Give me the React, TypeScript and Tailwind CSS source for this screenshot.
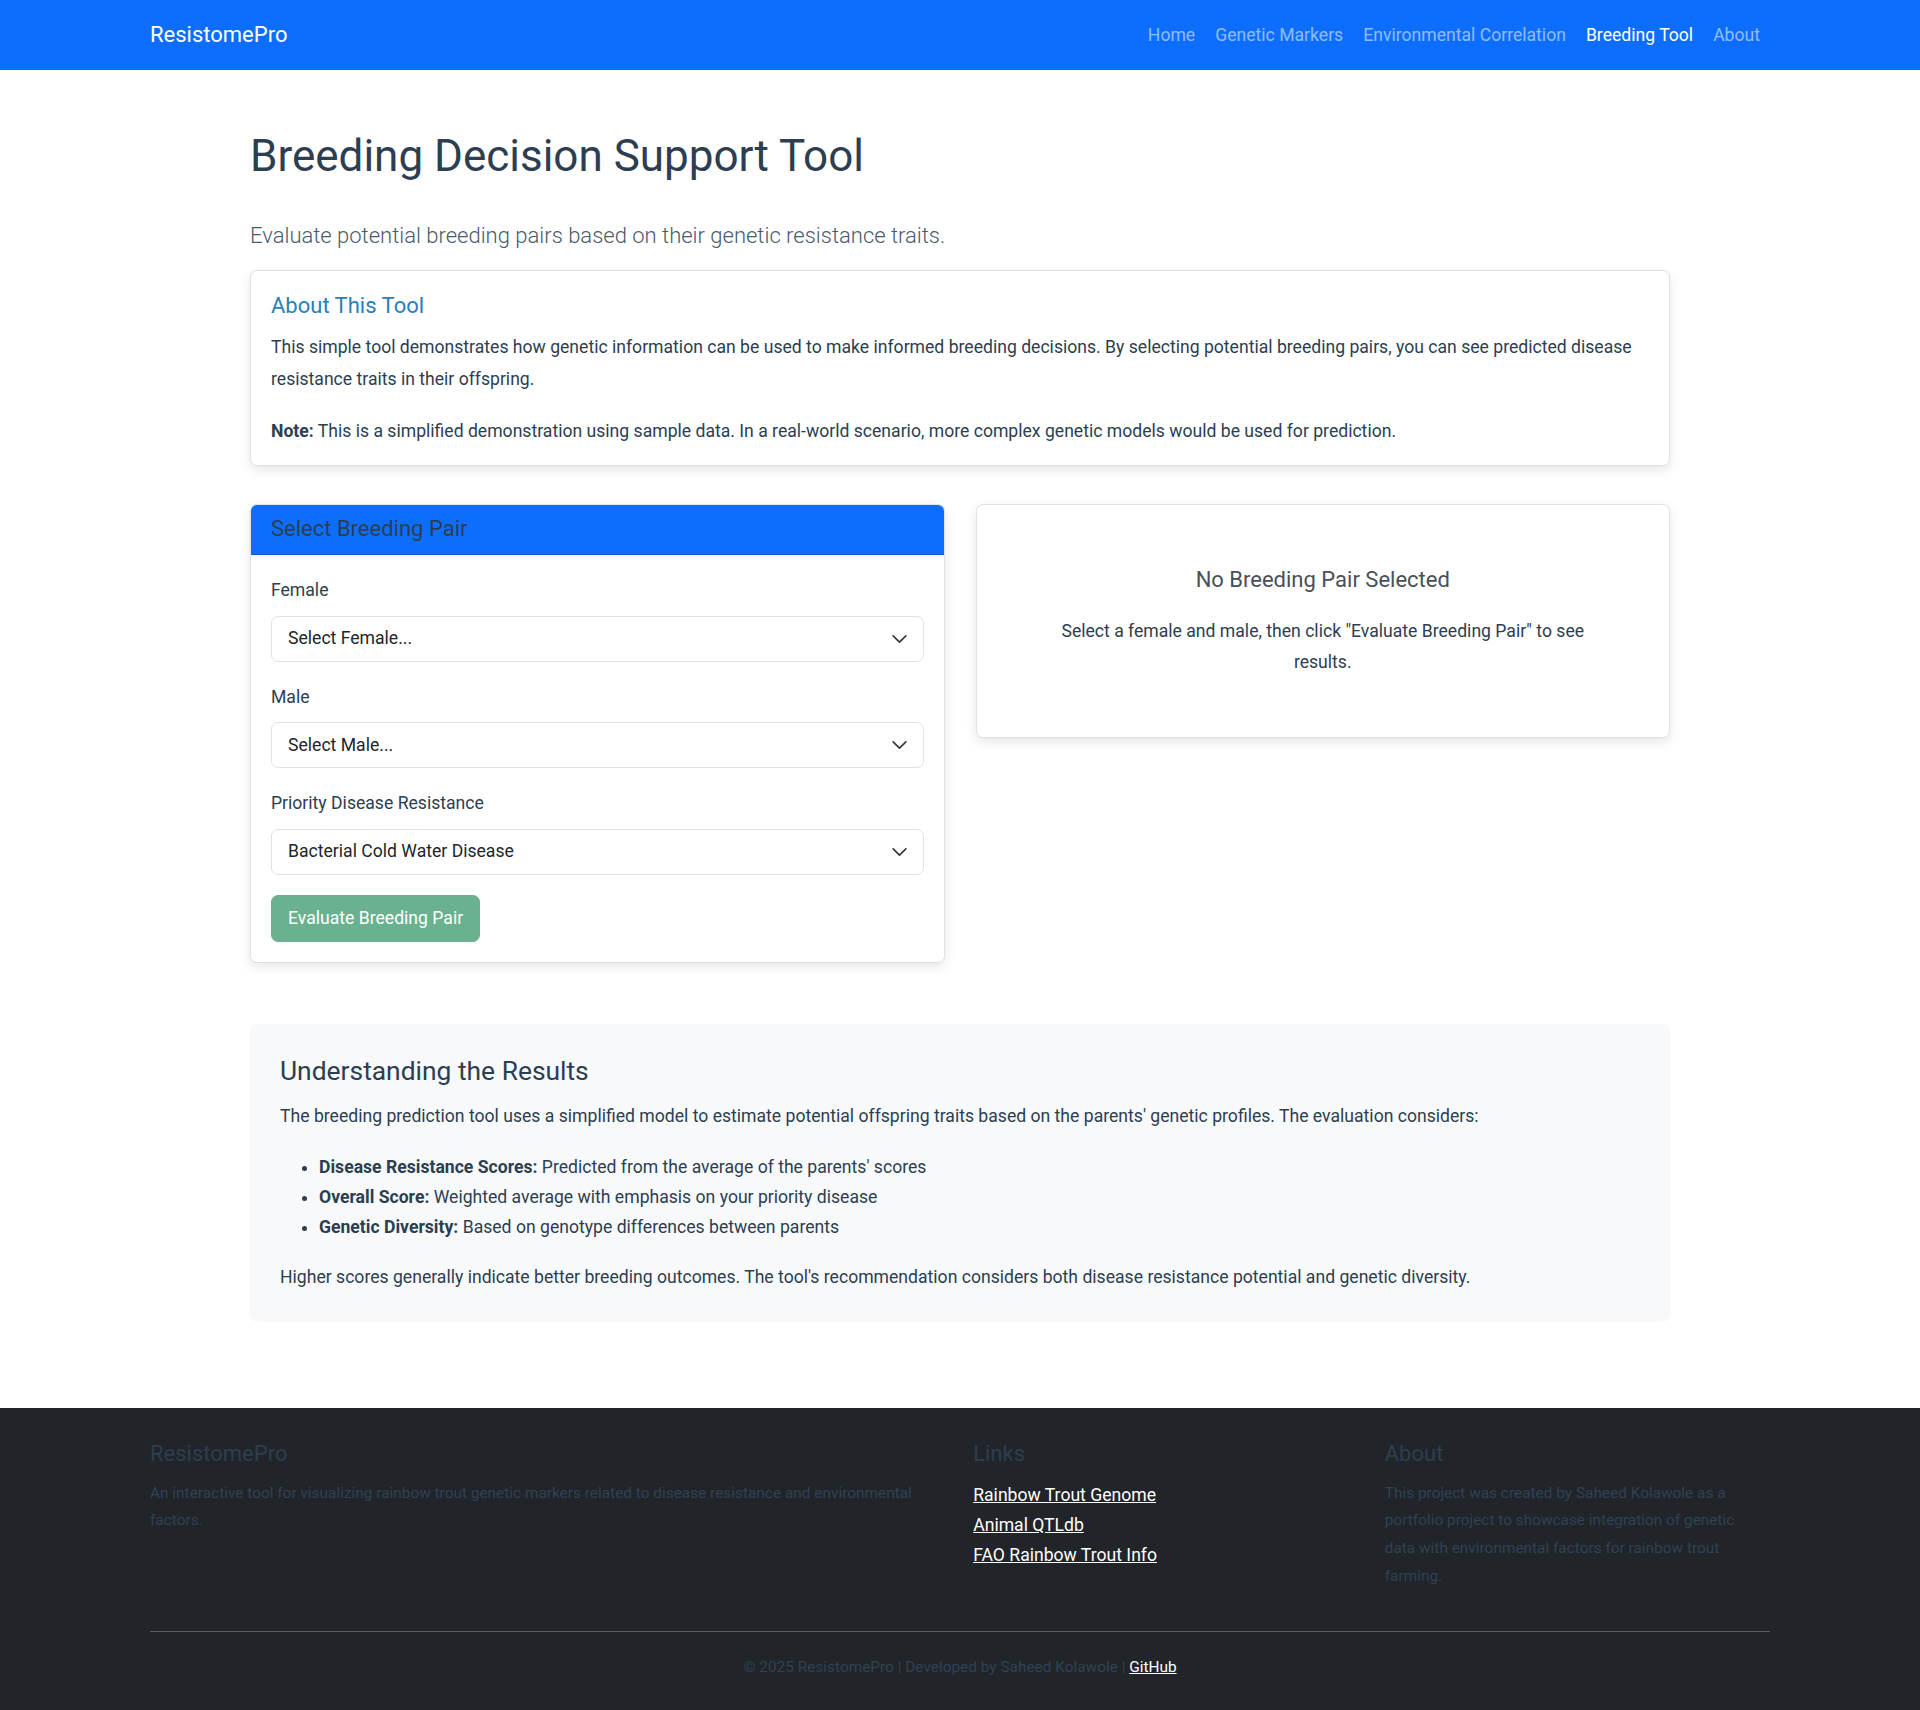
import React from "react";

const navLinks = [
  { label: "Home", active: false },
  { label: "Genetic Markers", active: false },
  { label: "Environmental Correlation", active: false },
  { label: "Breeding Tool", active: true },
  { label: "About", active: false },
];

const selects = [
  { id: "female", label: "Female", value: "Select Female..." },
  { id: "male", label: "Male", value: "Select Male..." },
  { id: "priority", label: "Priority Disease Resistance", value: "Bacterial Cold Water Disease" },
];

function Chevron() {
  return (
    <svg
      viewBox="0 0 16 16"
      className="pointer-events-none absolute right-[16px] top-1/2 h-[17px] w-[17px] -translate-y-1/2"
      fill="none"
      stroke="#343a40"
      strokeWidth="1.6"
      strokeLinecap="round"
      strokeLinejoin="round"
    >
      <path d="m2 5 6 6 6-6" />
    </svg>
  );
}

export default function App() {
  return (
    <div className="min-h-screen bg-white font-['Roboto','Liberation_Sans',sans-serif] text-[17.6px] leading-[1.8] text-[#2c3e50]">
      {/* Navbar */}
      <nav className="h-[70px] bg-[#0d6efd]">
        <div className="mx-auto flex h-full max-w-[1620px] items-center justify-between">
          <a href="#" className="text-[22px] leading-none text-white">
            ResistomePro
          </a>
          <ul className="flex">
            {navLinks.map((l) => (
              <li key={l.label}>
                <a
                  href="#"
                  className={
                    l.active
                      ? "block px-[10px] pt-[2px] text-[17.6px] leading-none text-white"
                      : "block px-[10px] pt-[2px] text-[17.6px] leading-none text-[rgba(255,255,255,0.55)]"
                  }
                >
                  {l.label}
                </a>
              </li>
            ))}
          </ul>
        </div>
      </nav>

      {/* Main */}
      <main className="mx-auto max-w-[1420px] pb-[86px] pt-[60px]">
        <h1 className="text-[44px] font-normal leading-[1.2]">Breeding Decision Support Tool</h1>
        <p className="mt-[36px] text-[22px] font-light leading-[1.5] text-[#4a5a6b]">
          Evaluate potential breeding pairs based on their genetic resistance traits.
        </p>

        {/* About card */}
        <div className="mt-[18px] rounded-[7px] border border-[#dee2e6] bg-white px-[20px] pb-[18px] pt-[22px] shadow-[0_4px_12px_rgba(0,0,0,0.1)]">
          <h5 className="mb-[13px] text-[22px] leading-[1.2] text-[#2980b9]">About This Tool</h5>
          <p className="mb-[20px]">
            This simple tool demonstrates how genetic information can be used to make informed breeding
            decisions. By selecting potential breeding pairs, you can see predicted disease resistance traits
            in their offspring.
          </p>
          <p>
            <strong className="font-bold">Note:</strong> This is a simplified demonstration using sample data. In
            a real-world scenario, more complex genetic models would be used for prediction.
          </p>
        </div>

        {/* Selector + results */}
        <div className="mt-[38px] grid grid-cols-2 items-start gap-[31px]">
          <div className="overflow-hidden rounded-[7px] border border-[#dee2e6] bg-white shadow-[0_4px_12px_rgba(0,0,0,0.1)]">
            <div className="flex h-[50px] items-center border-b border-[rgba(0,0,0,0.175)] bg-[#0d6efd] px-[20px]">
              <h5 className="text-[22px] leading-[1.2] text-[#2c3e50]">Select Breeding Pair</h5>
            </div>
            <div className="p-[20px]">
              {selects.map((s) => (
                <div key={s.id} className="mb-[20px]">
                  <label htmlFor={s.id} className="mb-[9px] block">
                    {s.label}
                  </label>
                  <div className="relative">
                    <select
                      id={s.id}
                      defaultValue={s.value}
                      className="h-[46px] w-full appearance-none rounded-[7px] border border-[#dee2e6] bg-white pl-[16px] pr-[44px] text-[17.6px] text-[#212529] outline-none"
                    >
                      <option>{s.value}</option>
                    </select>
                    <Chevron />
                  </div>
                </div>
              ))}
              <button
                type="button"
                disabled
                className="h-[47px] rounded-[7px] border border-[#6ab190] bg-[#6ab190] px-[16px] text-[17.6px] text-white"
              >
                Evaluate Breeding Pair
              </button>
            </div>
          </div>

          <div className="rounded-[7px] border border-[#dee2e6] bg-white px-[62px] pb-[58px] pt-[62px] text-center shadow-[0_4px_12px_rgba(0,0,0,0.1)]">
            <h5 className="mb-[22px] text-[22px] leading-[1.2] text-[#495057]">No Breeding Pair Selected</h5>
            <p>Select a female and male, then click "Evaluate Breeding Pair" to see results.</p>
          </div>
        </div>

        {/* Understanding the results */}
        <div className="mt-[61px] rounded-[8px] bg-[#f8f9fa] px-[30px] pb-[28px] pt-[32px]">
          <h4 className="mb-[13px] text-[26.4px] leading-[1.2]">Understanding the Results</h4>
          <p className="mb-[20px]">
            The breeding prediction tool uses a simplified model to estimate potential offspring traits based on
            the parents' genetic profiles. The evaluation considers:
          </p>
          <ul className="mb-[20px] list-disc pl-[39px] leading-[30px]">
            <li>
              <strong className="font-bold">Disease Resistance Scores:</strong> Predicted from the average of the
              parents' scores
            </li>
            <li>
              <strong className="font-bold">Overall Score:</strong> Weighted average with emphasis on your priority
              disease
            </li>
            <li>
              <strong className="font-bold">Genetic Diversity:</strong> Based on genotype differences between parents
            </li>
          </ul>
          <p>
            Higher scores generally indicate better breeding outcomes. The tool's recommendation considers both
            disease resistance potential and genetic diversity.
          </p>
        </div>
      </main>

      {/* Footer */}
      <footer className="bg-[#212529]">
        <div className="mx-auto max-w-[1620px] pb-[28px] pt-[33px]">
          <div className="grid grid-cols-[796.8px_385.2px_385.2px] gap-x-[26.4px]">
            <div>
              <h5 className="mb-[12px] text-[22px] leading-[1.2]">ResistomePro</h5>
              <p className="text-[15.4px] text-[#2f4156]">
                An interactive tool for visualizing rainbow trout genetic markers related to disease resistance and
                environmental factors.
              </p>
            </div>
            <div>
              <h5 className="mb-[12px] text-[22px] leading-[1.2]">Links</h5>
              <ul className="leading-[30px]">
                <li>
                  <a href="#" className="text-white underline">
                    Rainbow Trout Genome
                  </a>
                </li>
                <li>
                  <a href="#" className="text-white underline">
                    Animal QTLdb
                  </a>
                </li>
                <li>
                  <a href="#" className="text-white underline">
                    FAO Rainbow Trout Info
                  </a>
                </li>
              </ul>
            </div>
            <div className="pr-[12px]">
              <h5 className="mb-[12px] text-[22px] leading-[1.2]">About</h5>
              <p className="text-[15.4px] text-[#2f4156]">
                This project was created by Saheed Kolawole as a portfolio project to showcase integration of genetic
                data with environmental factors for rainbow trout farming.
              </p>
            </div>
          </div>
          <hr className="mt-[41px] border-0 border-t border-[#5a5d60]" />
          <p className="mt-[22px] text-center text-[15.4px] text-[#2f4156]">
            © 2025 ResistomePro | Developed by Saheed Kolawole |{" "}
            <a href="#" className="text-white underline">
              GitHub
            </a>
          </p>
        </div>
      </footer>
    </div>
  );
}
